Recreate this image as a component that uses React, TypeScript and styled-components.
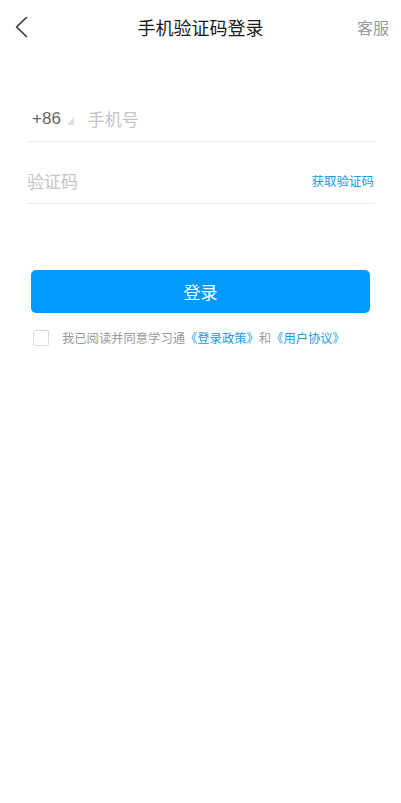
import React from "react";
import styled, { createGlobalStyle } from "styled-components";

const GlobalStyle = createGlobalStyle`
  html, body { margin: 0; padding: 0; background: #ffffff; }
  body { font-family: "Noto Sans CJK SC", "Noto Sans", sans-serif; }
  * { box-sizing: border-box; }
`;

const Page = styled.div`
  width: 401px;
  min-height: 803px;
  background: #fff;
  display: flex;
  flex-direction: column;
`;

const Header = styled.header`
  height: 54px;
  display: grid;
  grid-template-columns: 1fr auto 1fr;
  align-items: center;
  padding: 0 12px 0 12px;
`;

const BackButton = styled.div`
  display: flex;
  align-items: center;
  justify-self: start;
  margin-left: 2px;
`;

const Title = styled.h1`
  margin: 0;
  font-size: 18px;
  font-weight: 400;
  color: #1a1a1a;
  line-height: 1;
`;

const Service = styled.span`
  justify-self: end;
  font-size: 16px;
  color: #999;
`;

const Form = styled.div`
  margin: 45px 26px 0 27px;
  display: flex;
  flex-direction: column;
  gap: 19px;
`;

const Row = styled.div`
  height: 43px;
  display: flex;
  align-items: center;
  border-bottom: 1px solid #ececec;
  padding-bottom: 3px;
`;

const Prefix = styled.span`
  margin-left: 5px;
  font-family: "Liberation Sans", "Noto Sans CJK SC", sans-serif;
  font-size: 17px;
  color: #666;
`;

const Triangle = styled.svg`
  margin: 4px 14px 0 6px;
`;

const Placeholder = styled.span`
  flex: 1;
  font-size: 17px;
  color: #c4c4c4;
`;

const CodeLink = styled.span`
  font-size: 12.5px;
  color: #1c9be6;
  margin-right: 1px;
`;

const LoginButton = styled.button`
  margin: 66px 31px 0 31px;
  height: 43px;
  border: none;
  border-radius: 5px;
  background: #0099ff;
  color: #fff;
  font-family: inherit;
  font-size: 17px;
  display: flex;
  align-items: center;
  justify-content: center;
`;

const Agreement = styled.div`
  margin: 16px 0 0 33px;
  display: flex;
  align-items: center;
  gap: 13px;
`;

const Checkbox = styled.span`
  width: 16px;
  height: 16px;
  border: 1px solid #dcdcdc;
  border-radius: 2px;
`;

const AgreementText = styled.span`
  font-size: 12.3px;
  color: #999;
`;

const Link = styled.span`
  color: #1c9be6;
`;

export default function App() {
  return (
    <>
      <GlobalStyle />
      <Page>
        <Header>
          <BackButton>
            <svg width="14" height="22" viewBox="0 0 14 22">
              <polyline
                points="12.5,1.5 2.5,11 12.5,20.5"
                fill="none"
                stroke="#333"
                strokeWidth="1.6"
                strokeLinecap="round"
                strokeLinejoin="round"
              />
            </svg>
          </BackButton>
          <Title>手机验证码登录</Title>
          <Service>客服</Service>
        </Header>
        <Form>
          <Row>
            <Prefix>+86</Prefix>
            <Triangle width="7" height="8" viewBox="0 0 7 8">
              <polygon points="7,0 7,8 0,8" fill="#dedede" />
            </Triangle>
            <Placeholder>手机号</Placeholder>
          </Row>
          <Row>
            <Placeholder>验证码</Placeholder>
            <CodeLink>获取验证码</CodeLink>
          </Row>
        </Form>
        <LoginButton>登录</LoginButton>
        <Agreement>
          <Checkbox />
          <AgreementText>
            我已阅读并同意学习通<Link>《登录政策》</Link>和<Link>《用户协议》</Link>
          </AgreementText>
        </Agreement>
      </Page>
    </>
  );
}
